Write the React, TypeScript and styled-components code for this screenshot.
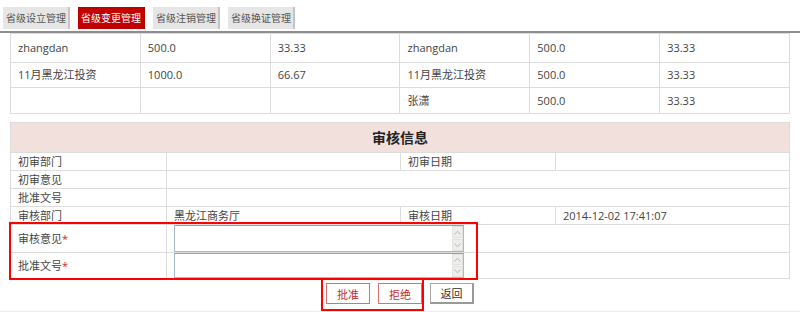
import React from 'react';
import styled, { createGlobalStyle } from 'styled-components';

const GlobalStyle = createGlobalStyle`
  body {
    margin: 0;
    background: #fff;
    font-family: "Open Sans", "Noto Sans CJK SC", sans-serif;
    font-size: 11px;
    color: #444;
  }
`;

const tabs = ['省级设立管理', '省级变更管理', '省级注销管理', '省级换证管理'];

const shareholders = [
  ['zhangdan', '500.0', '33.33', 'zhangdan', '500.0', '33.33'],
  ['11月黑龙江投资', '1000.0', '66.67', '11月黑龙江投资', '500.0', '33.33'],
  ['', '', '', '张潇', '500.0', '33.33'],
];
const rowHeights = [29, 25, 26];

const Arrow = ({ up }: { up?: boolean }) => (
  <svg width="7" height="5" viewBox="0 0 7 5">
    <path
      d={up ? 'M0.5 4.5 L3.5 1.2 L6.5 4.5' : 'M0.5 0.5 L3.5 3.8 L6.5 0.5'}
      fill="none"
      stroke="#b8b8b8"
      strokeWidth="1"
    />
  </svg>
);

const MemoField = ({ height }: { height: number }) => (
  <Field style={{ height }}>
    <Memo />
    <Scrollbar>
      <ArrowButton>
        <Arrow up />
      </ArrowButton>
      <ArrowButton>
        <Arrow />
      </ArrowButton>
    </Scrollbar>
  </Field>
);

const App = () => {
  return (
    <Page>
      <GlobalStyle />
      <TabBar>
        {tabs.map((t, i) => (
          <Tab key={t} $active={i === 1}>
            {t}
          </Tab>
        ))}
      </TabBar>
      <Content>
        <DataTable>
          <tbody>
            {shareholders.map((row, r) => (
              <tr key={r} style={{ height: rowHeights[r] }}>
                {row.map((c, i) => (
                  <Cell key={i}>{c}</Cell>
                ))}
              </tr>
            ))}
          </tbody>
        </DataTable>

        <AuditTable>
          <colgroup>
            <col style={{ width: 156 }} />
            <col style={{ width: 234 }} />
            <col style={{ width: 155 }} />
            <col />
          </colgroup>
          <tbody>
            <tr>
              <HeadCell colSpan={4}>审核信息</HeadCell>
            </tr>
            <InfoRow>
              <Cell>初审部门</Cell>
              <Cell></Cell>
              <Cell>初审日期</Cell>
              <Cell></Cell>
            </InfoRow>
            <InfoRow $h={18}>
              <Cell>初审意见</Cell>
              <Cell colSpan={3}></Cell>
            </InfoRow>
            <InfoRow>
              <Cell>批准文号</Cell>
              <Cell colSpan={3}></Cell>
            </InfoRow>
            <InfoRow $h={18}>
              <Cell>审核部门</Cell>
              <Cell>黑龙江商务厅</Cell>
              <Cell>审核日期</Cell>
              <Cell>2014-12-02 17:41:07</Cell>
            </InfoRow>
            <InfoRow $h={27}>
              <Cell>
                审核意见<Required>*</Required>
              </Cell>
              <FieldCell colSpan={3}>
                <MemoField height={27} />
              </FieldCell>
            </InfoRow>
            <InfoRow $h={26}>
              <Cell>
                批准文号<Required>*</Required>
              </Cell>
              <FieldCell colSpan={3}>
                <MemoField height={25} />
              </FieldCell>
            </InfoRow>
          </tbody>
        </AuditTable>

        <ButtonRow>
          <ActionButton $tone="danger">批准</ActionButton>
          <ActionButton $tone="danger">拒绝</ActionButton>
          <ActionButton>返回</ActionButton>
        </ButtonRow>
      </Content>

      <Highlight $top={222} $left={9} $width={469} $height={58} />
      <Highlight $top={278} $left={321} $width={103} $height={33} />
    </Page>
  );
};

const Page = styled.div`
  position: relative;
  width: 800px;
  height: 312px;
  overflow: hidden;
  border-bottom: 1px solid #eeeeee;
  box-sizing: border-box;
`;

const TabBar = styled.div`
  display: flex;
  gap: 8px;
  padding: 7px 0 2px 3px;
  border-bottom: 2px solid #8e8e8e;
`;

const Tab = styled.div<{ $active?: boolean }>`
  height: 22px;
  line-height: 22px;
  padding: 0 2px 0 3px;
  font-size: 10px;
  white-space: nowrap;
  background: ${(p) => (p.$active ? '#c10000' : '#e6e6e6')};
  color: ${(p) => (p.$active ? '#fff' : '#555')};
  border-right: 2px solid ${(p) => (p.$active ? '#b00000' : '#c4c4c4')};
`;

const Content = styled.div`
  padding: 0 10px;
`;

const DataTable = styled.table`
  width: 780px;
  border-collapse: collapse;
  table-layout: fixed;
  border-left: 1px solid #dcdcdc;
  border-right: 1px solid #dcdcdc;
`;

const Cell = styled.td`
  border: 1px solid #dcdcdc;
  padding: 0 7px;
  font-size: 11px;
  line-height: 14px;
  color: #444;
  white-space: nowrap;
  overflow: hidden;
`;

const AuditTable = styled.table`
  width: 780px;
  margin-top: 8px;
  border-collapse: collapse;
  table-layout: fixed;
`;

const HeadCell = styled.td`
  height: 29px;
  padding: 0;
  border: 1px solid #dcdcdc;
  background: #f2e0dd;
  text-align: center;
  font-size: 14px;
  line-height: 18px;
  font-weight: bold;
  color: #222;
`;

const InfoRow = styled.tr<{ $h?: number }>`
  height: ${(p) => p.$h ?? 18}px;
`;

const Required = styled.span`
  color: #e02020;
`;

const FieldCell = styled(Cell)`
  padding: 0 7px;
`;

const Field = styled.div`
  display: flex;
  width: 290px;
  box-sizing: border-box;
  border: 1px solid #a8b8cc;
  border-top-color: #8fa2ba;
  background: #fff;
`;

const Memo = styled.textarea`
  flex: 1;
  border: none;
  outline: none;
  resize: none;
  padding: 0;
  margin: 0;
  overflow: hidden;
  background: transparent;
`;

const Scrollbar = styled.div`
  width: 11px;
  display: flex;
  flex-direction: column;
  gap: 1px;
  background: #f4f4f4;
`;

const ArrowButton = styled.div`
  flex: 1;
  display: flex;
  align-items: center;
  justify-content: center;
  background: #eeeeec;
  border: 1px solid #e2e2e0;
`;

const ButtonRow = styled.div`
  display: flex;
  justify-content: center;
  gap: 8px;
  margin-top: 4px;
`;

const ActionButton = styled.button<{ $tone?: 'danger' }>`
  width: 44px;
  height: 21px;
  padding: 0;
  background: #fff;
  font-family: "Open Sans", "Noto Sans CJK SC", sans-serif;
  font-size: 11px;
  cursor: pointer;
  color: ${(p) => (p.$tone === 'danger' ? '#c42a2a' : '#333')};
  border: 1px solid ${(p) => (p.$tone === 'danger' ? '#e07070' : '#aaaaaa')};
  ${(p) =>
    p.$tone === 'danger'
      ? ''
      : 'border-right-color: #999; border-bottom-color: #999; border-width: 1px 2px 2px 1px;'}
`;

const Highlight = styled.div<{ $top: number; $left: number; $width: number; $height: number }>`
  position: absolute;
  top: ${(p) => p.$top}px;
  left: ${(p) => p.$left}px;
  width: ${(p) => p.$width}px;
  height: ${(p) => p.$height}px;
  box-sizing: border-box;
  border: 2px solid #ff0000;
  pointer-events: none;
`;

export default App;
